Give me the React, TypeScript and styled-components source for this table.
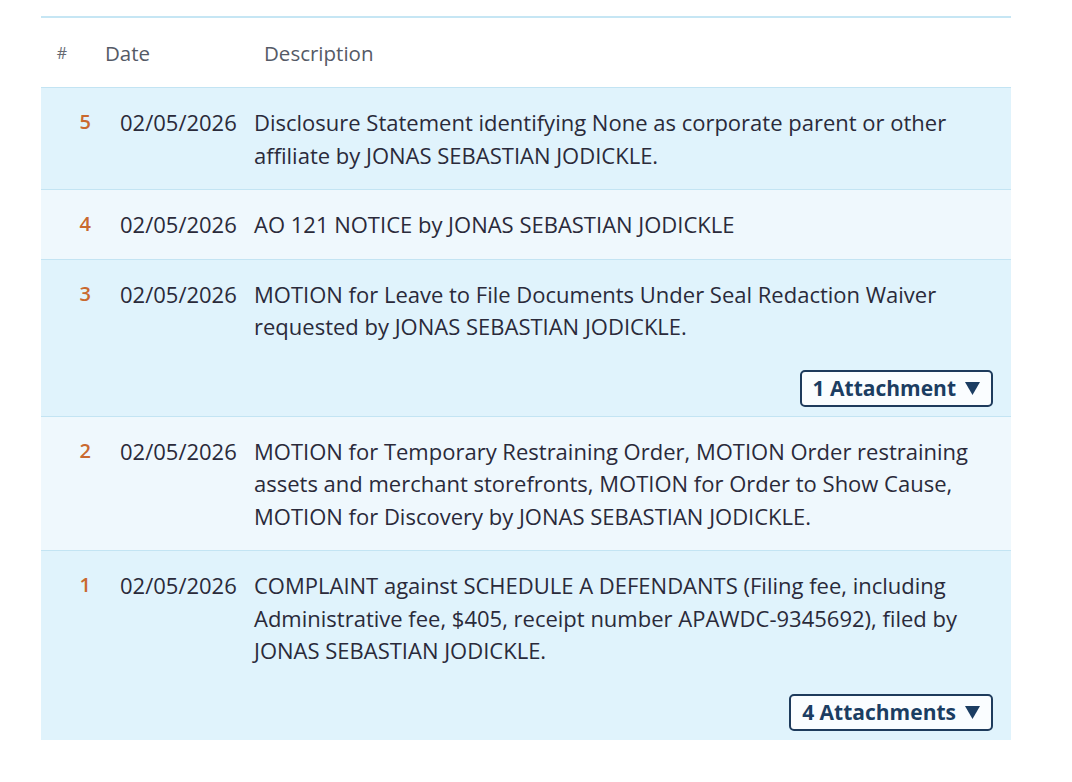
import React from 'react';
import styled, { createGlobalStyle } from 'styled-components';

const GlobalStyle = createGlobalStyle`
  html, body {
    margin: 0;
    padding: 0;
    background: #ffffff;
  }
  body {
    font-family: "Open Sans", "Noto Sans", "DejaVu Sans", sans-serif;
    color: #2a2a3a;
  }
`;

type Entry = {
  no: number;
  date: string;
  text: string;
  attachments?: number;
};

const entries: Entry[] = [
  {
    no: 5,
    date: '02/05/2026',
    text: 'Disclosure Statement identifying None as corporate parent or other affiliate by JONAS SEBASTIAN JODICKLE.',
  },
  {
    no: 4,
    date: '02/05/2026',
    text: 'AO 121 NOTICE by JONAS SEBASTIAN JODICKLE',
  },
  {
    no: 3,
    date: '02/05/2026',
    text: 'MOTION for Leave to File Documents Under Seal Redaction Waiver requested by JONAS SEBASTIAN JODICKLE.',
    attachments: 1,
  },
  {
    no: 2,
    date: '02/05/2026',
    text: 'MOTION for Temporary Restraining Order, MOTION Order restraining assets and merchant storefronts, MOTION for Order to Show Cause, MOTION for Discovery by JONAS SEBASTIAN JODICKLE.',
  },
  {
    no: 1,
    date: '02/05/2026',
    text: 'COMPLAINT against SCHEDULE A DEFENDANTS (Filing fee, including Administrative fee, $405, receipt number APAWDC-9345692), filed by JONAS SEBASTIAN JODICKLE.',
    attachments: 4,
  },
];

const Page = styled.div`
  padding: 16px 61px 40px 41px;
`;

const Docket = styled.div`
  width: 970px;
  border-top: 2px solid #c6e6f4;
`;

const HeaderRow = styled.div`
  display: grid;
  grid-template-columns: 64px 159px 1fr;
  align-items: center;
  height: 69px;
  color: #555a66;
  font-size: 20.5px;
`;

const HashCell = styled.span`
  font-size: 16px;
  text-align: right;
  padding-right: 38px;
  color: #666a72;
`;

const Row = styled.div<{ $tinted: boolean; $hasFiles: boolean }>`
  display: grid;
  grid-template-columns: 79px 134px 1fr;
  padding: 18px 18px ${(p) => (p.$hasFiles ? '9px' : '18px')} 0;
  background: ${(p) => (p.$tinted ? '#e0f3fc' : '#eff8fd')};
  border-top: 1.5px solid #c3e4f3;
  font-size: 22px;
  line-height: 32.5px;
`;

const NumCell = styled.span`
  text-align: right;
  padding-right: 29px;
  font-size: 20px;
  font-weight: 600;
  color: #c9692f;
`;

const DateCell = styled.span`
  white-space: nowrap;
`;

const DescCell = styled.div`
  display: flex;
  flex-direction: column;
`;

const FilesBar = styled.div`
  display: flex;
  justify-content: flex-end;
  margin-top: 27px;
`;

const FilesButton = styled.button`
  display: inline-flex;
  align-items: center;
  gap: 9px;
  height: 37px;
  padding: 0 11px;
  border: 2px solid #1e3b5c;
  border-radius: 5px;
  background: #fafdff;
  color: #1b3d62;
  font-family: "Open Sans", "Noto Sans", sans-serif;
  font-size: 21px;
  font-weight: 700;
  cursor: pointer;
`;

const Caret = styled.svg`
  width: 15px;
  height: 13px;
  fill: #1b3d62;
`;

export default function App() {
  return (
    <>
      <GlobalStyle />
      <Page>
        <Docket>
          <HeaderRow>
            <HashCell>#</HashCell>
            <span>Date</span>
            <span>Description</span>
          </HeaderRow>
          {entries.map((e, i) => (
            <Row key={e.no} $tinted={i % 2 === 0} $hasFiles={!!e.attachments}>
              <NumCell>{e.no}</NumCell>
              <DateCell>{e.date}</DateCell>
              <DescCell>
                <span>{e.text}</span>
                {e.attachments ? (
                  <FilesBar>
                    <FilesButton>
                      {e.attachments} {e.attachments === 1 ? 'Attachment' : 'Attachments'}
                      <Caret viewBox="0 0 15 13">
                        <path d="M0 0h15L7.5 13z" />
                      </Caret>
                    </FilesButton>
                  </FilesBar>
                ) : null}
              </DescCell>
            </Row>
          ))}
        </Docket>
      </Page>
    </>
  );
}
